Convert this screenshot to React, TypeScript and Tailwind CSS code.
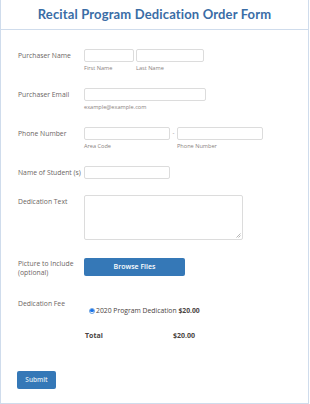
import React from "react";

const font = { fontFamily: "'Open Sans', Lato, sans-serif" };

function Label({ children, className = "" }: { children: React.ReactNode; className?: string }) {
  return (
    <div className={`w-[66px] shrink-0 text-[6.8px] leading-[9px] text-[#6c6664] ${className}`}>{children}</div>
  );
}

function Input({ w }: { w: string }) {
  return <div className={`${w} h-[13px] rounded-[2px] border border-[#dcdcdc] bg-white`} />;
}

function Sub({ children }: { children: React.ReactNode }) {
  return <div className="mt-[3px] text-[5.6px] leading-[6px] text-[#8a8280]">{children}</div>;
}

export default function App() {
  return (
    <div className="w-[310px] h-[404px] bg-white" style={font}>
      <div className="w-[309px] h-[404px] border-l border-r border-b border-[#cfdcec] flex flex-col">
        <div className="h-[30px] border-b border-[#cfdcec] flex items-center justify-center">
          <h1
            className="text-[13px] font-bold text-[#3a6da6] tracking-[0.15px]"
            style={{ fontFamily: "Lato, sans-serif" }}
          >
            Recital Program Dedication Order Form
          </h1>
        </div>

        <div className="pl-[17px] flex flex-col">
          {/* Purchaser Name */}
          <div className="flex mt-[19px]">
            <Label className="mt-[2px]">Purchaser Name</Label>
            <div className="flex gap-[2px]">
              <div>
                <Input w="w-[50px]" />
                <Sub>First Name</Sub>
              </div>
              <div>
                <Input w="w-[68px]" />
                <Sub>Last Name</Sub>
              </div>
            </div>
          </div>

          {/* Email */}
          <div className="flex mt-[17px]">
            <Label className="mt-[2px]">Purchaser Email</Label>
            <div>
              <Input w="w-[122px]" />
              <Sub>example@example.com</Sub>
            </div>
          </div>

          {/* Phone */}
          <div className="flex mt-[17px]">
            <Label className="mt-[2px]">Phone Number</Label>
            <div className="flex">
              <div>
                <Input w="w-[86px]" />
                <Sub>Area Code</Sub>
              </div>
              <div className="w-[7px] text-center text-[6px] leading-[13px] text-[#857b78]">-</div>
              <div>
                <Input w="w-[86px]" />
                <Sub>Phone Number</Sub>
              </div>
            </div>
          </div>

          {/* Student */}
          <div className="flex mt-[17px]">
            <Label className="mt-[2px] whitespace-nowrap">Name of Student (s)</Label>
            <Input w="w-[86px]" />
          </div>

          {/* Dedication Text */}
          <div className="flex mt-[16px]">
            <Label className="mt-[2px]">Dedication Text</Label>
            <div className="relative w-[159px] h-[45px] rounded-[2px] border border-[#dcdcdc] bg-white">
              <svg className="absolute right-[1px] bottom-[1px]" width="5" height="5" viewBox="0 0 5 5">
                <path d="M4.5 0.5 L0.5 4.5 M4.5 2.5 L2.5 4.5" stroke="#999" strokeWidth="0.7" />
              </svg>
            </div>
          </div>

          {/* Picture */}
          <div className="flex mt-[18px]">
            <Label className="mt-[1px]">
              Picture to Include
              <br />
              (optional)
            </Label>
            <button className="w-[101px] h-[18px] rounded-[2px] bg-[#3578b7] text-white text-[7px] font-semibold flex items-center justify-center">
              Browse Files
            </button>
          </div>

          {/* Dedication Fee */}
          <div className="flex mt-[22px]">
            <Label>Dedication Fee</Label>
            <div className="pt-[7px]">
              <div className="flex items-center ml-[5px] text-[6.8px] leading-[9px] text-[#4a4442]">
                <span className="w-[6px] h-[6px] rounded-full border border-[#6aa1e0] bg-white flex items-center justify-center mr-[1px]">
                  <span className="w-[3.5px] h-[3.5px] rounded-full bg-[#1a73e8]" />
                </span>
                <span className="whitespace-pre">2020 Program Dedication </span>
                <span className="font-bold">$20.00</span>
              </div>
            </div>
          </div>

          {/* Total */}
          <div className="flex mt-[16px] text-[7px] leading-[9px] font-bold text-[#4a4442]">
            <div className="w-[67px]" />
            <div className="w-[88px]">Total</div>
            <div>$20.00</div>
          </div>

          {/* Submit */}
          <div className="mt-[31px] -ml-[1px]">
            <button className="w-[39px] h-[18px] rounded-[2px] bg-[#3578b7] text-[#dfe9f4] text-[6.5px] font-semibold flex items-center justify-center">
              Submit
            </button>
          </div>
        </div>
      </div>
    </div>
  );
}
